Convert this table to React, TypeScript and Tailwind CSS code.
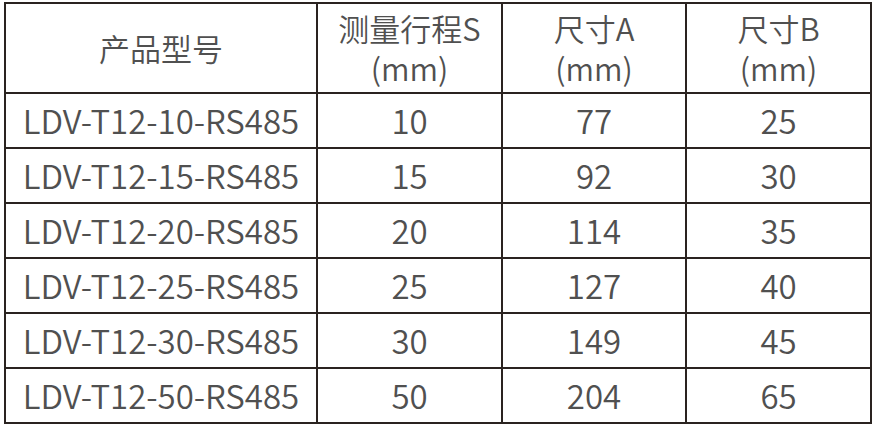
import React from 'react';

const rows = [
    ['LDV-T12-10-RS485', '10', '77', '25'],
    ['LDV-T12-15-RS485', '15', '92', '30'],
    ['LDV-T12-20-RS485', '20', '114', '35'],
    ['LDV-T12-25-RS485', '25', '127', '40'],
    ['LDV-T12-30-RS485', '30', '149', '45'],
    ['LDV-T12-50-RS485', '50', '204', '65'],
];

const cell = 'border-2 border-[#2a2320] text-center align-middle p-0';
const head = `${cell} font-[350] text-[31px]`;

const HeadCell: React.FC<{ top: string; }> = ({ top }) => (
    <th className={head}>
        <div className="leading-[40px]">{top}</div>
        <div className="leading-[40px]">(mm)</div>
    </th>
);

const App: React.FC = () => {
    return (
        <div className="w-[876px] h-[426px] bg-white pt-[2px] pl-[4px]" style={{ fontFamily: '"Noto Sans CJK SC", "Noto Sans", sans-serif' }}>
            <table className="border-collapse text-[#505050] table-fixed w-[866px]">
                <colgroup>
                    <col className="w-[312px]" />
                    <col className="w-[185px]" />
                    <col className="w-[184px]" />
                    <col className="w-[185px]" />
                </colgroup>
                <thead>
                    <tr className="h-[90px]">
                        <th className={head}>产品型号</th>
                        <HeadCell top="测量行程S" />
                        <HeadCell top="尺寸A" />
                        <HeadCell top="尺寸B" />
                    </tr>
                </thead>
                <tbody>
                    {rows.map(r => (
                        <tr key={r[0]} className="h-[55px]">
                            {r.map((v, i) => (
                                <td key={i} className={`${cell} font-[350] text-[33px] leading-none`}>{v}</td>
                            ))}
                        </tr>
                    ))}
                </tbody>
            </table>
        </div>
    );
};

export default App;
